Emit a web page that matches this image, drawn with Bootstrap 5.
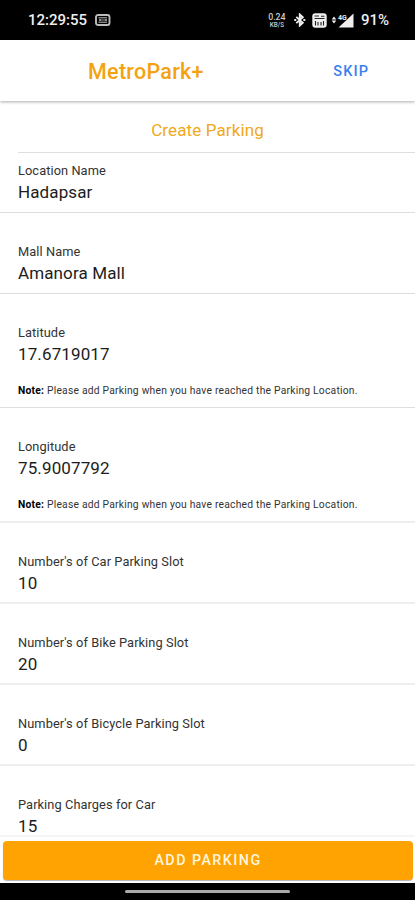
<!DOCTYPE html>
<html lang="en">
<head>
<meta charset="utf-8">
<meta name="viewport" content="width=device-width, initial-scale=1">
<title>MetroPark+</title>
<link rel="stylesheet" href="https://cdn.jsdelivr.net/npm/bootstrap@5.3.0/dist/css/bootstrap.min.css">
<style>
body{font-family:Roboto,sans-serif;color:#1c1c1c;line-height:1.25}
.status-bar{height:40px;background:#000;color:#eee;padding:0 26px 0 28px;font-size:15px;font-weight:500}
.rate{width:18px;color:#ccc}
.rate-num{font-size:8.8px;line-height:10px}
.rate-unit{font-size:6.3px;line-height:7px}
.app-head{height:61px;box-shadow:0 1px 3px rgba(0,0,0,.32);z-index:1;padding:3px 46px 0 88px}
.brand{font-size:21.5px;font-weight:500;color:#f3a312;letter-spacing:.28px}
.skip{font-size:14.5px;font-weight:500;color:#3c7ff0;letter-spacing:1.1px}
.page-title{height:51px;padding-top:8px;font-size:17px;color:#f0a820;letter-spacing:.12px}
.title-rule{margin-left:18px;height:1px;background:#dedede}
.field{height:81px;padding:0 18px;border-bottom:1px solid #dedede}
.field.first{height:60px}
.field.noted{height:114.3px}
.field.faint{border-bottom:2px solid #eee}
.field-label{font-size:12.8px;line-height:16px;padding-top:31px;height:47px;color:#333;letter-spacing:.08px}
.first .field-label{padding-top:10px;height:26px}
.field-value{font-size:17px;line-height:18px;margin-top:4px;height:18px;color:#1c1c1c;letter-spacing:.12px}
.note{font-size:10.3px;line-height:14px;margin-top:21px;color:#333;white-space:nowrap;letter-spacing:.225px}
.note b{color:#000}
.foot{height:48px;padding:4px 2px 3px 3px;border-top:2px solid #f5f5f5}
.add-btn,.add-btn:hover{background:#ffa303;color:#fff6df;font-size:14.3px;font-weight:500;letter-spacing:1.45px;border-radius:4px;border:0;box-shadow:0 1px 1px rgba(0,0,0,.3)}
.gesture{height:17px;background:#000}
.gesture span{width:165px;height:3px;border-radius:2px;background:#aaa}
</style>
<script src="https://cdn.jsdelivr.net/npm/bootstrap@5.3.0/dist/js/bootstrap.bundle.min.js"></script>
</head>
<body class="vh-100 d-flex flex-column overflow-hidden bg-white">
<div class="status-bar d-flex align-items-center flex-shrink-0">
  <span class="clock">12:29:55</span>
  <svg class="ms-2" width="16" height="12" viewBox="0 0 16 12" fill="none" stroke="#bbb"><rect x="1" y="1" width="13.500" height="10" rx="2" stroke-width="1.900"/><path d="M3.500 3.800h8.500M3.500 8.200h8.500" stroke-width="1"/><path d="M4 6h2.500M7.500 6h1M9.500 6h2.500" stroke-width="1.500"/></svg>
  <div class="rate text-center ms-auto"><div class="rate-num">0.24</div><div class="rate-unit">KB/S</div></div>
  <svg class="ms-2" width="12" height="14" viewBox="0 0 12 14" fill="none" stroke="#eee" stroke-width="1.900"><path d="M2.300 3.900l6.500 5.900-3 2.700V1.500l3 2.700-6.500 5.900"/><path d="M.3 7h2M9.300 7h2"/></svg>
  <svg style="margin-left:6px" width="15" height="15" viewBox="0 0 15 15"><rect x=".3" y=".3" width="14.400" height="14.400" rx="3" fill="#eee"/><path d="M2.500 3h4.500M9 3.200h3.500M2.500 5.500h10M3.500 8v4.500M6 9v3.500M9 9v3.500M11.500 8v4.500" stroke="#222" stroke-width="1.100"/></svg>
  <svg class="ms-1" width="23" height="15" viewBox="1 0 23 15" fill="#eee"><path d="M4 3.400l2.300 3H1.700zM4 10.600l2.300-3H1.700zM23.500 .5V14.500H8.500z"/><text x="8" y="6.500" font-size="7" font-weight="700" stroke="#000" stroke-width="1" paint-order="stroke">4G</text></svg>
  <span class="batt" style="margin-left:7px">91%</span>
</div>
<header class="app-head d-flex align-items-center justify-content-between bg-white position-relative flex-shrink-0">
  <span class="brand">MetroPark+</span><a class="skip text-decoration-none" href="#">SKIP</a>
</header>
<main class="flex-grow-1 overflow-hidden">
  <div class="page-title d-flex align-items-center justify-content-center"><span>Create Parking</span></div>
  <div class="title-rule"></div>
  <div class="field first"><div class="field-label">Location Name</div><div class="field-value">Hadapsar</div></div>
  <div class="field"><div class="field-label">Mall Name</div><div class="field-value">Amanora Mall</div></div>
  <div class="field noted"><div class="field-label">Latitude</div><div class="field-value">17.6719017</div><div class="note"><b>Note:</b> Please add Parking when you have reached the Parking Location.</div></div>
  <div class="field noted faint"><div class="field-label">Longitude</div><div class="field-value">75.9007792</div><div class="note"><b>Note:</b> Please add Parking when you have reached the Parking Location.</div></div>
  <div class="field faint"><div class="field-label">Number's of Car Parking Slot</div><div class="field-value">10</div></div>
  <div class="field faint"><div class="field-label">Number's of Bike Parking Slot</div><div class="field-value">20</div></div>
  <div class="field faint"><div class="field-label">Number's of Bicycle Parking Slot</div><div class="field-value">0</div></div>
  <div class="field border-0"><div class="field-label">Parking Charges for Car</div><div class="field-value">15</div></div>
</main>
<div class="foot d-flex flex-shrink-0 bg-white"><button type="button" class="btn add-btn w-100 p-0">ADD PARKING</button></div>
<div class="gesture d-flex align-items-center justify-content-center flex-shrink-0"><span></span></div>
</body>
</html>
